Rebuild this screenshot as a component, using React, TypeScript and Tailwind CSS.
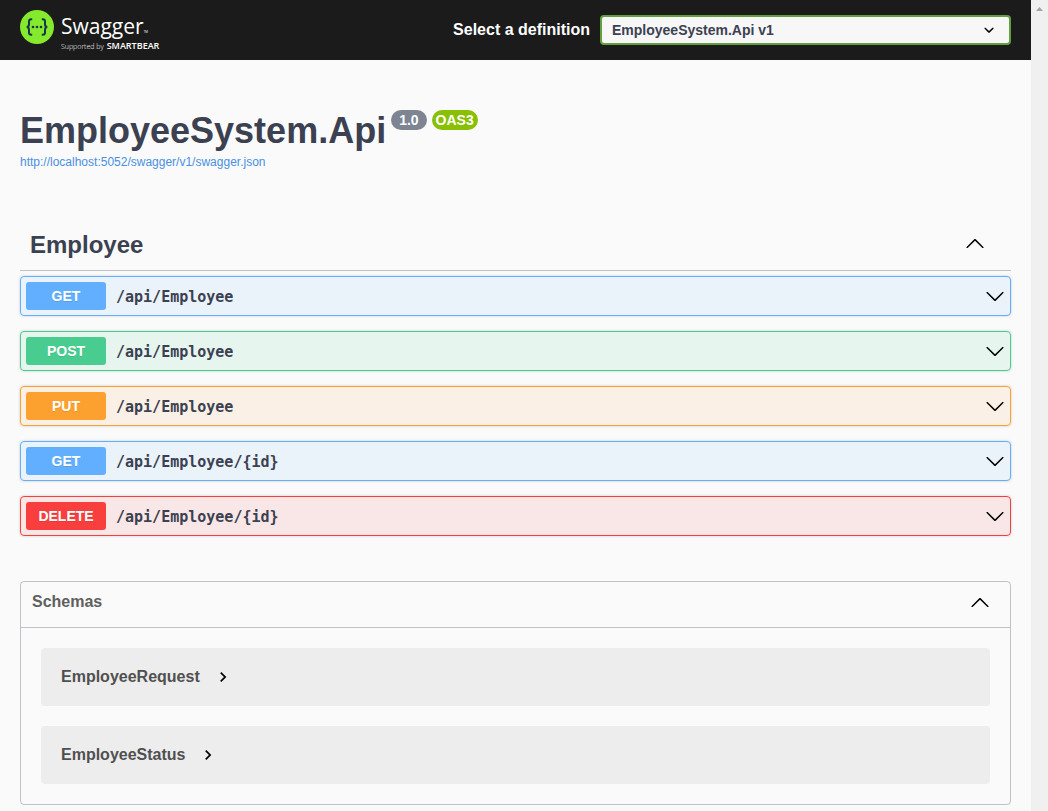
import React from "react";

type Method = "GET" | "POST" | "PUT" | "DELETE";

const operations: { method: Method; path: string }[] = [
  { method: "GET", path: "/api/Employee" },
  { method: "POST", path: "/api/Employee" },
  { method: "PUT", path: "/api/Employee" },
  { method: "GET", path: "/api/Employee/{id}" },
  { method: "DELETE", path: "/api/Employee/{id}" },
];

const schemas = ["EmployeeRequest", "EmployeeStatus"];

const rowStyles: Record<Method, string> = {
  GET: "border-[#61affe] bg-[#61affe]/10",
  POST: "border-[#49cc90] bg-[#49cc90]/10",
  PUT: "border-[#fca130] bg-[#fca130]/10",
  DELETE: "border-[#f93e3e] bg-[#f93e3e]/10",
};

const badgeStyles: Record<Method, string> = {
  GET: "bg-[#61affe]",
  POST: "bg-[#49cc90]",
  PUT: "bg-[#fca130]",
  DELETE: "bg-[#f93e3e]",
};

function ArrowDown() {
  return (
    <svg viewBox="0 0 20 20" className="size-5 shrink-0 fill-black" aria-hidden="true">
      <path d="M17.418 6.109c.272-.268.709-.268.979 0s.271.701 0 .969l-7.908 7.83c-.27.268-.707.268-.979 0l-7.908-7.83c-.27-.268-.27-.701 0-.969s.709-.268.979 0L10 13.25z" />
    </svg>
  );
}

function ArrowUp() {
  return (
    <svg viewBox="0 0 20 20" className="size-5 shrink-0 fill-black" aria-hidden="true">
      <path d="M17.418 14.908c.272.268.709.268.979 0s.271-.701 0-.969l-7.908-7.83c-.27-.268-.707-.268-.979 0l-7.908 7.83c-.27.268-.27.701 0 .969s.709.268.979 0L10 7.767z" />
    </svg>
  );
}

function Logo() {
  return (
    <a href="#" aria-label="Swagger" className="flex items-start gap-[7px] text-white">
      <svg viewBox="0 0 34 34" className="size-[34px] shrink-0" aria-hidden="true">
        <circle cx="17" cy="17" r="17" fill="#85ea2d" />
        <g fill="none" stroke="#173647" strokeWidth="2">
          <path d="M12.2 9.200h-1c-1.500 0-2.200.8-2.200 2.200v2.800c0 1.600-.7 2.700-2.300 2.800 1.600.1 2.300 1.200 2.300 2.800v2.800c0 1.400.7 2.200 2.200 2.200h1" />
          <path d="M21.800 9.200h1c1.500 0 2.200.8 2.200 2.200v2.800c0 1.600.7 2.700 2.300 2.800-1.600.1-2.300 1.200-2.300 2.800v2.800c0 1.400-.7 2.200-2.200 2.200h-1" />
        </g>
        <g fill="#173647">
          <circle cx="13" cy="17" r="1.300" />
          <circle cx="17" cy="17" r="1.300" />
          <circle cx="21" cy="17" r="1.300" />
        </g>
      </svg>
      <span className="flex flex-col font-['Open_Sans',sans-serif]">
        <span className="flex items-end text-[21px] leading-8">
          Swagger<span className="text-[3px] leading-5">TM</span>
        </span>
        <span className="flex items-baseline gap-[3px] text-[7px] leading-2">
          <span className="font-light">Supported by</span>
          <b className="text-[9px] leading-2 font-semibold">SMARTBEAR</b>
        </span>
      </span>
    </a>
  );
}

export default function App() {
  return (
    <div className="flex min-h-screen bg-[#fafafa] font-['Liberation_Sans',Arial,sans-serif] text-[#3b4151]">
      <div className="min-w-0 flex-1">
        <header className="flex h-[60px] items-center justify-between bg-[#1b1b1b] px-5">
          <Logo />
          <div className="flex items-center gap-[10px]">
            <label htmlFor="definition" className="text-base font-bold text-white">
              Select a definition
            </label>
            <div className="relative">
              <select
                id="definition"
                className="block h-[30px] w-[411px] appearance-none rounded-sm border-2 border-[#62a03f] bg-[#f7f7f7] pr-10 pl-[10px] text-sm font-bold"
              >
                <option>EmployeeSystem.Api v1</option>
              </select>
              <svg viewBox="0 0 20 20" className="pointer-events-none absolute top-[5px] right-3 size-5" aria-hidden="true">
                <path d="M13.418 7.859c.271-.268.709-.268.978 0s.27.701 0 .969l-3.908 3.83c-.27.268-.707.268-.979 0l-3.908-3.83c-.27-.267-.27-.701 0-.969s.709-.268.978 0L10 11z" />
              </svg>
            </div>
          </div>
        </header>

        <main className="px-5 pt-[50px] pb-[6px]">
          <div className="flex items-start gap-[5px]">
            <h1 className="text-4xl leading-[42px] font-bold">EmployeeSystem.Api</h1>
            <span className="flex h-5 items-center rounded-full bg-[#7d8492] px-2 text-sm font-bold text-white">1.0</span>
            <span className="flex h-5 items-center rounded-full bg-[#89bf04] px-1 text-sm font-bold text-white">OAS3</span>
          </div>
          <a href="#" className="mt-[2px] block text-xs leading-4 text-[#4990e2]">
            http://localhost:5052/swagger/v1/swagger.json
          </a>

          <section className="mt-[50px]">
            <h2>
              <button className="flex w-full items-start justify-between border-b border-[#3b4151]/30 py-[13px] pr-[26px] pl-[10px] text-2xl leading-6 font-bold">
                Employee
                <ArrowUp />
              </button>
            </h2>
            <div className="mt-[5px] flex flex-col gap-[15px]">
              {operations.map(({ method, path }) => (
                <button
                  key={method + path}
                  className={`flex w-full items-center rounded border p-[5px] text-left shadow-[0_0_3px_rgba(0,0,0,0.19)] ${rowStyles[method]}`}
                >
                  <span
                    className={`w-20 rounded-[3px] text-center text-sm leading-7 font-bold text-white text-shadow-[0_1px_0_rgba(0,0,0,0.1)] ${badgeStyles[method]}`}
                  >
                    {method}
                  </span>
                  <span className="flex-1 px-[10px] pt-0.5 font-['DejaVu_Sans_Mono',monospace] text-[15px] leading-5 font-bold">
                    {path}
                  </span>
                  <ArrowDown />
                </button>
              ))}
            </div>
          </section>

          <section className="mt-[45px] rounded border border-[#3b4151]/30">
            <h2>
              <button className="flex w-full items-center justify-between border-b border-[#3b4151]/30 pt-2 pr-5 pb-[13px] pl-[11px] text-base leading-6 font-bold text-[#606060]">
                Schemas
                <ArrowUp />
              </button>
            </h2>
            <div className="flex flex-col gap-5 p-5">
              {schemas.map((name) => (
                <button
                  key={name}
                  className="flex h-[58px] items-center gap-[13px] rounded bg-black/5 px-5 text-base font-bold text-[#505050]"
                >
                  {name}
                  <svg viewBox="0 0 24 24" className="size-5 fill-black" aria-hidden="true">
                    <path d="M10 6L8.590 7.410 13.170 12l-4.580 4.590L10 18l6-6z" />
                  </svg>
                </button>
              ))}
            </div>
          </section>
        </main>
      </div>
      <div className="flex w-[17px] shrink-0 justify-center bg-[#f0f0f0] pt-[7px]" aria-hidden="true">
        <svg viewBox="0 0 7 4" className="h-1 w-[7px]">
          <path d="M3.500 0L7 4H0z" fill="#a3a3a3" />
        </svg>
      </div>
    </div>
  );
}
